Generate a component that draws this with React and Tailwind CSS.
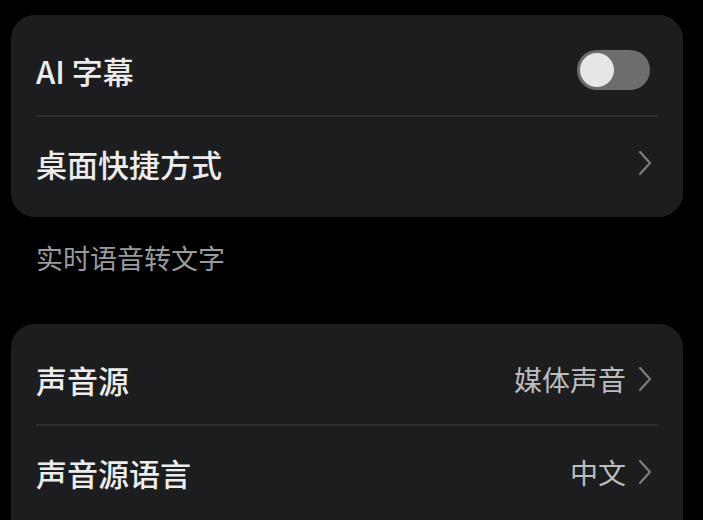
import React from 'react';

const font = { fontFamily: '"Noto Sans CJK SC", "Noto Sans", sans-serif' };

function Chevron() {
    return (
        <svg width="14" height="26" viewBox="0 0 14 26" fill="none" className="shrink-0">
            <path d="M2 2 L12 13 L2 24" stroke="#7c7d80" strokeWidth="2.2" strokeLinecap="round" strokeLinejoin="round" />
        </svg>
    );
}

function Toggle() {
    return (
        <div className="w-[73px] h-[40px] rounded-full bg-[#6c6d6f] p-[3px] flex items-center mr-[2px]">
            <div className="w-[34px] h-[34px] rounded-full bg-[#e6e6e6]" />
        </div>
    );
}

function Row({ label, value, right, first }) {
    return (
        <div className={`flex items-center justify-between ${first ? 'h-[90px]' : 'h-[100px] pb-[8px]'}`}>
            <span className="text-[31px] font-medium text-[#ececec] leading-none">{label}</span>
            <div className="flex items-center gap-[12px] pr-[6px]">
                {value && <span className="text-[28px] text-[#bdbdbf] leading-none">{value}</span>}
                {right}
            </div>
        </div>
    );
}

function Divider() {
    return <div className="h-[2px] bg-[#2c2d30]" />;
}

export default function App() {
    return (
        <div className="w-[703px] h-[520px] bg-black overflow-hidden" style={font}>
            <div className="pt-[15px] pl-[11px] pr-[20px]">
                {/* Card 1 */}
                <div className="bg-[#1c1d1f] rounded-[24px] px-[25px] pt-[10px]">
                    <Row first label="AI 字幕" right={<Toggle />} />
                    <Divider />
                    <Row label="桌面快捷方式" right={<Chevron />} />
                </div>

                {/* Section label */}
                <div className="h-[107px] flex items-center px-[25px] pb-[26px]">
                    <span className="text-[27px] text-[#999a9c] leading-none">实时语音转文字</span>
                </div>

                {/* Card 2 */}
                <div className="bg-[#1c1d1f] rounded-[24px] px-[25px] pt-[10px] pb-[40px]">
                    <Row first label="声音源" value="媒体声音" right={<Chevron />} />
                    <Divider />
                    <Row label="声音源语言" value="中文" right={<Chevron />} />
                </div>
            </div>
        </div>
    );
}
